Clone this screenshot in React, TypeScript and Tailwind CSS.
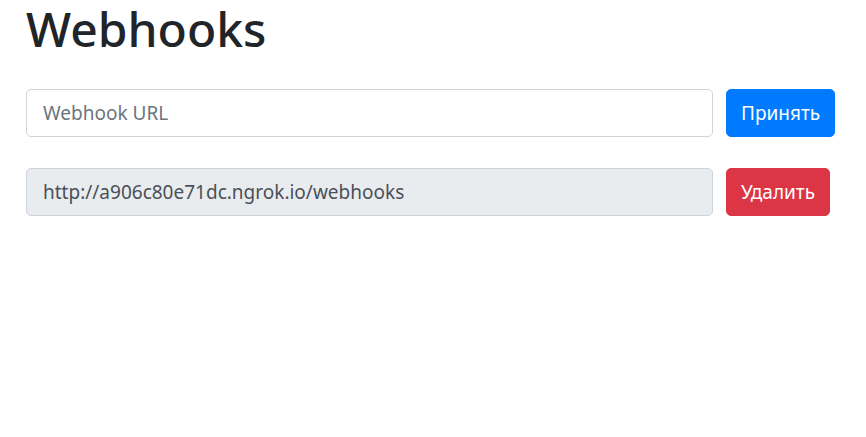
export default function App() {
  return (
    <div className="min-h-[437px] bg-white pl-[26px] font-['Noto_Sans',sans-serif] text-[#212529]">
      <h1 className="text-[48px] leading-[58px] font-medium">Webhooks</h1>
      <div className="mt-[31px] flex">
        <input
          type="text"
          placeholder="Webhook URL"
          className="h-[48px] w-[687px] rounded-[5px] border border-[#ced4da] bg-white px-4 text-[19px] text-[#495057] outline-none placeholder:text-[#6c757d]"
        />
        <button className="ml-[13px] h-[48px] rounded-[5px] border border-[#007bff] bg-[#007bff] px-[14px] text-[19px] text-white">
          Принять
        </button>
      </div>
      <div className="mt-[31px] flex">
        <input
          type="text"
          readOnly
          value="http://a906c80e71dc.ngrok.io/webhooks"
          className="h-[48px] w-[687px] rounded-[5px] border border-[#ced4da] bg-[#e9ecef] px-4 text-[19px] text-[#495057] outline-none"
        />
        <button className="ml-[13px] h-[48px] rounded-[5px] border border-[#dc3545] bg-[#dc3545] px-[14px] text-[19px] text-white">
          Удалить
        </button>
      </div>
    </div>
  );
}
